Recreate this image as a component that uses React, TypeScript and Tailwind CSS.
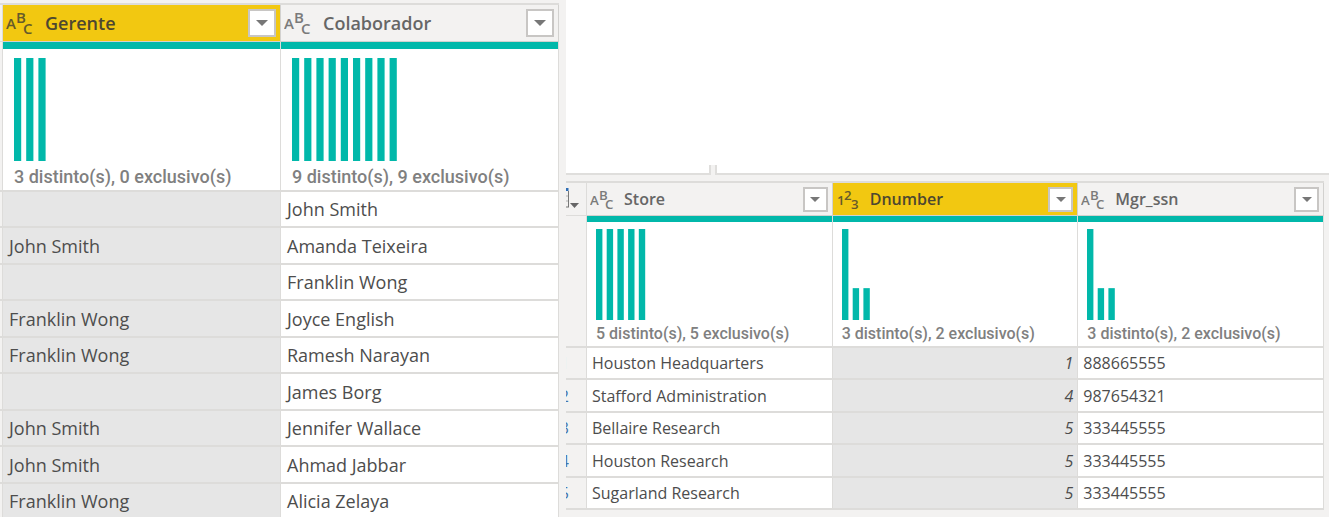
import { clsx } from "clsx";

type Kind = "text" | "number";
type Size = "lg" | "md";

interface Column {
  name: string;
  kind: Kind;
  selected?: boolean;
  summary: string;
  bars: number[];
}

interface Grid {
  label: string;
  size: Size;
  columns: Column[];
  rows: string[][];
}

const employees: Grid = {
  label: "Gerente e Colaborador",
  size: "lg",
  columns: [
    { name: "Gerente", kind: "text", selected: true, summary: "3 distinto(s), 0 exclusivo(s)", bars: [1, 1, 1] },
    {
      name: "Colaborador",
      kind: "text",
      summary: "9 distinto(s), 9 exclusivo(s)",
      bars: [1, 1, 1, 1, 1, 1, 1, 1, 1],
    },
  ],
  rows: [
    ["", "John Smith"],
    ["John Smith", "Amanda Teixeira"],
    ["", "Franklin Wong"],
    ["Franklin Wong", "Joyce English"],
    ["Franklin Wong", "Ramesh Narayan"],
    ["", "James Borg"],
    ["John Smith", "Jennifer Wallace"],
    ["John Smith", "Ahmad Jabbar"],
    ["Franklin Wong", "Alicia Zelaya"],
  ],
};

const stores: Grid = {
  label: "Store",
  size: "md",
  columns: [
    { name: "Store", kind: "text", summary: "5 distinto(s), 5 exclusivo(s)", bars: [1, 1, 1, 1, 1] },
    { name: "Dnumber", kind: "number", selected: true, summary: "3 distinto(s), 2 exclusivo(s)", bars: [1, 0.35, 0.35] },
    { name: "Mgr_ssn", kind: "text", summary: "3 distinto(s), 2 exclusivo(s)", bars: [1, 0.35, 0.35] },
  ],
  rows: [
    ["Houston Headquarters", "1", "888665555"],
    ["Stafford Administration", "4", "987654321"],
    ["Bellaire Research", "5", "333445555"],
    ["Houston Research", "5", "333445555"],
    ["Sugarland Research", "5", "333445555"],
  ],
};

function TypeIcon({ kind, size }: { kind: Kind; size: Size }) {
  const [a, b, c] = kind === "text" ? ["A", "B", "C"] : ["1", "2", "3"];
  const number = kind === "number";
  return (
    <svg
      viewBox="0 0 27 26"
      className={clsx(
        "shrink-0 overflow-visible fill-current opacity-85",
        size === "lg" ? "h-[26px] w-[27px]" : "h-[23px] w-6",
      )}
      fontSize="15"
      fontWeight="600"
      aria-hidden="true"
    >
      <text x={number ? 1 : 0} y="19">{a}</text>
      <text x={number ? 9 : 10} y="13">{b}</text>
      <text x={number ? 17 : 17} y="24">{c}</text>
    </svg>
  );
}

function Histogram({ bars, size }: { bars: number[]; size: Size }) {
  const large = size === "lg";
  const height = large ? 103 : 91;
  const pitch = large ? 12.2 : 10.7;
  const width = large ? 7.2 : 6.4;
  return (
    <svg width={pitch * bars.length} height={height} className="block fill-[#01b8aa]" aria-hidden="true">
      {bars.map((v, i) => (
        <rect key={i} x={i * pitch} y={height * (1 - v)} width={width} height={height * v} />
      ))}
    </svg>
  );
}

function HeaderCell({ column, size }: { column: Column; size: Size }) {
  const large = size === "lg";
  return (
    <th
      scope="col"
      className={clsx(
        "border-r border-b border-[#d2d1cf] p-0 font-semibold",
        column.selected ? "bg-[#f2c811] text-[#4d4730]" : "bg-[#f3f2f1] text-[#666666]",
      )}
    >
      <div className={clsx("flex items-center", large ? "h-9 gap-3 pr-1 pl-[3px]" : "h-8 gap-[10px] pr-1 pl-[3px]")}>
        <TypeIcon kind={column.kind} size={size} />
        <span className={clsx("grow text-left", large ? "text-[18px]" : "text-[16px]")}>{column.name}</span>
        <button
          type="button"
          aria-label={`Filtrar ${column.name}`}
          className={clsx(
            "flex shrink-0 items-center justify-center border-2 border-[#c8c6c4] bg-white text-[#777777]",
            large ? "h-7 w-7" : "h-[25px] w-[25px]",
          )}
        >
          <svg viewBox="0 0 12 6" className={clsx("fill-current", large ? "h-[6px] w-3" : "h-[5px] w-[10px]")} aria-hidden="true">
            <path d="M0 0h12L6 6z" />
          </svg>
        </button>
      </div>
    </th>
  );
}

function DataGrid({ grid }: { grid: Grid }) {
  const { size, columns, rows } = grid;
  const large = size === "lg";
  const line = "border-[#dddcda]";
  return (
    <table
      aria-label={grid.label}
      className={clsx("w-full table-fixed border-separate border-spacing-0 border-t-2", line)}
    >
      <colgroup>
        <col className={large ? "w-[3px]" : "w-[21px]"} />
        {columns.map((c) => (
          <col key={c.name} />
        ))}
      </colgroup>
      <thead>
        <tr>
          <td className={clsx("border-r border-b p-0", line)}>
            {!large && (
              <svg viewBox="0 0 13 22" className="block h-[22px] w-[13px]" aria-hidden="true">
                <path d="M0 1.500h2.500" className="stroke-[#2f6eb5]" strokeWidth="3" />
                <path d="M2.500 3v16M0 19h3" className="stroke-[#777777]" fill="none" />
                <path d="M0 8h2M0 13h2" className="stroke-[#b5b5b5]" />
                <path d="M4 15h9l-4.500 5z" className="fill-[#666666]" />
              </svg>
            )}
          </td>
          {columns.map((c) => (
            <HeaderCell key={c.name} column={c} size={size} />
          ))}
        </tr>
        <tr>
          <td className={clsx("border-r border-b-2 p-0", line)} />
          {columns.map((c) => (
            <td key={c.name} className={clsx("border-r border-b-2 bg-white p-0", line)}>
              <div className={clsx("bg-[#01b8aa]", large ? "h-[7px]" : "h-[6px]")} />
              <div className={clsx("flex flex-col", large ? "h-[141px] gap-[5px] pt-[9px] pl-[11px]" : "h-[124px] gap-1 pt-[7px] pl-[9px]")}>
                <Histogram bars={c.bars} size={size} />
                <span
                  className={clsx(
                    "font-['Roboto',sans-serif] font-medium whitespace-nowrap text-[#808080]",
                    large ? "text-[18px]/[22px]" : "text-[16px]/[20px]",
                  )}
                >
                  {c.summary}
                </span>
              </div>
            </td>
          ))}
        </tr>
      </thead>
      <tbody className={large ? "text-[18px]" : "text-[16px]"}>
        {rows.map((row, r) => (
          <tr key={r} className={large ? "odd:h-9 even:h-[37px]" : "odd:h-8 even:h-[33px]"}>
            <td className={clsx("border-r border-b-2 p-0", line)}>
              {!large && (
                <div className="flex w-[3px] justify-end overflow-hidden text-[#3f74ad]">
                  <span>{r + 1}</span>
                </div>
              )}
            </td>
            {row.map((value, i) => (
              <td
                key={i}
                className={clsx(
                  "border-r border-b-2 py-0 text-[#4d4d4d]",
                  line,
                  large ? "pr-1 pl-[6px]" : "pr-1 pl-[5px]",
                  columns[i].selected ? "bg-[#e6e6e6]" : "bg-white",
                  columns[i].kind === "number" && "text-right font-medium italic",
                )}
              >
                {value}
              </td>
            ))}
          </tr>
        ))}
      </tbody>
    </table>
  );
}

export default function App() {
  return (
    <main className="grid h-screen grid-cols-[566fr_763fr] overflow-hidden bg-white font-['Open_Sans',sans-serif] leading-5">
      <section className="overflow-hidden bg-[#f3f2f1] pt-[3px] pr-[7px]">
        <DataGrid grid={employees} />
      </section>
      <section className="flex flex-col overflow-hidden pt-[165px]">
        <div className="flex gap-1 bg-[#f3f2f1]">
          <div className="h-[10px] w-[145px] border-r-2 border-b-2 border-[#dfdedc] bg-white" />
          <div className="h-[10px] grow border-b-2 border-l-2 border-[#dfdedc] bg-white" />
        </div>
        <div className="grow bg-[#f3f2f1] pt-[6px] pr-[5px]">
          <DataGrid grid={stores} />
        </div>
      </section>
    </main>
  );
}
